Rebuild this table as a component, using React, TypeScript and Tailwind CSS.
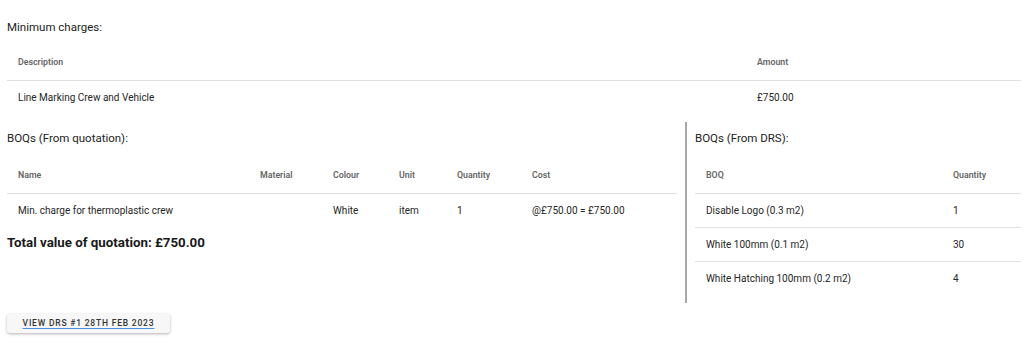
import React from "react";

const head = "text-left font-semibold text-[8.8px] text-[#666] px-[11px] h-[34px] border-b border-[#e0e0e0]";
const cell = "text-[10px] text-[#262626] px-[11px] h-[34px]";

function Title({ children, className = "" }: { children: React.ReactNode; className?: string }) {
  return <div className={`text-[11.5px] leading-[16px] text-[#222] ${className}`}>{children}</div>;
}

export default function App() {
  const drsRows = [
    { boq: "Disable Logo (0.3 m2)", qty: "1" },
    { boq: "White 100mm (0.1 m2)", qty: "30" },
    { boq: "White Hatching 100mm (0.2 m2)", qty: "4" },
  ];

  return (
    <main className="min-h-[358px] bg-white pl-[7px] pr-[3px] font-['Roboto',sans-serif]">
      <Title className="pt-[19px] mb-[11px]">Minimum charges:</Title>
      <table className="w-full table-fixed border-collapse">
        <colgroup>
          <col className="w-[739px]" />
          <col />
        </colgroup>
        <thead>
          <tr>
            <th className={head}>Description</th>
            <th className={head}>Amount</th>
          </tr>
        </thead>
        <tbody>
          <tr>
            <td className={cell}>Line Marking Crew and Vehicle</td>
            <td className={cell}>£750.00</td>
          </tr>
        </tbody>
      </table>

      <div className="flex mt-[8px]">
        <section className="w-[680px] pr-[10px] border-r-2 border-[#a8a8a8]">
          <Title className="mt-[8px] mb-[13px]">BOQs (From quotation):</Title>
          <table className="w-[670px] table-fixed border-collapse">
            <colgroup>
              <col className="w-[242px]" />
              <col className="w-[73px]" />
              <col className="w-[66px]" />
              <col className="w-[58px]" />
              <col className="w-[75px]" />
              <col />
            </colgroup>
            <thead>
              <tr>
                <th className={head}>Name</th>
                <th className={head}>Material</th>
                <th className={head}>Colour</th>
                <th className={head}>Unit</th>
                <th className={head}>Quantity</th>
                <th className={head}>Cost</th>
              </tr>
            </thead>
            <tbody>
              <tr>
                <td className={cell}>Min. charge for thermoplastic crew</td>
                <td className={cell}></td>
                <td className={cell}>White</td>
                <td className={cell}>item</td>
                <td className={cell}>1</td>
                <td className={cell}>@£750.00 = £750.00</td>
              </tr>
            </tbody>
          </table>
          <div className="mt-[8px] text-[13.3px] leading-[16px] font-bold text-[#1a1a1a]">
            Total value of quotation: £750.00
          </div>
        </section>

        <section className="flex-1 pl-[8px] pb-[8px]">
          <Title className="mt-[8px] mb-[13px]">BOQs (From DRS):</Title>
          <table className="w-full table-fixed border-collapse">
            <colgroup>
              <col className="w-[247px]" />
              <col />
            </colgroup>
            <thead>
              <tr>
                <th className={head}>BOQ</th>
                <th className={head}>Quantity</th>
              </tr>
            </thead>
            <tbody>
              {drsRows.map((r, i) => (
                <tr key={r.boq} className={i < drsRows.length - 1 ? "border-b border-[#e0e0e0]" : ""}>
                  <td className={cell}>{r.boq}</td>
                  <td className={cell}>{r.qty}</td>
                </tr>
              ))}
            </tbody>
          </table>
        </section>
      </div>

      <button className="mt-[11px] h-[19px] w-[163px] rounded-[3px] bg-[#f7f7f7] shadow-[0_1px_3px_rgba(0,0,0,0.3)] text-[8.5px] font-medium tracking-[0.8px] text-[#333] underline decoration-[#4a90e2] underline-offset-2">
        VIEW DRS #1 28TH FEB 2023
      </button>
    </main>
  );
}
